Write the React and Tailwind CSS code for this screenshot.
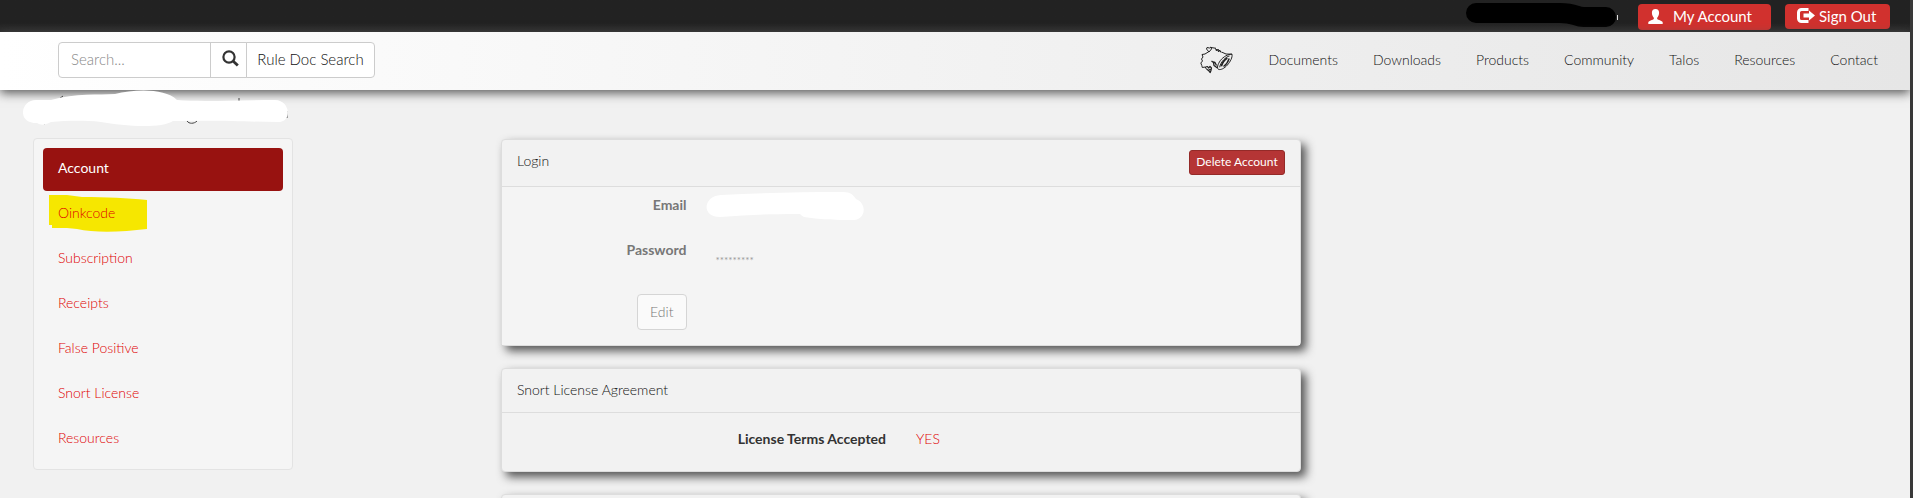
const navLinks = ['Documents', 'Downloads', 'Products', 'Community', 'Talos', 'Resources', 'Contact'];
const sideLinks = ['Account', 'Oinkcode', 'Subscription', 'Receipts', 'False Positive', 'Snort License', 'Resources'];

function UserIcon() {
  return (
    <svg width="15" height="15" viewBox="0 0 15 15" fill="currentColor" aria-hidden="true">
      <path d="M7.5 0C5 0 3.9 1.6 3.9 3.8c0 2 .8 3.9 1.9 4.9.3 1.3-.2 1.6-1.2 2C2.6 11.4.6 12.2.3 13.200V15h14.400v-1.800c-.3-1-2.300-1.800-4.300-2.500-1-.4-1.500-.7-1.200-2 1.100-1 1.900-2.900 1.900-4.900C11.100 1.600 10 0 7.500 0z" />
    </svg>
  );
}

function SignOutIcon() {
  return (
    <svg width="18" height="15" viewBox="0 0 18 15" aria-hidden="true">
      <path d="M11.500 1.500H4.500a3 3 0 0 0-3 3v6a3 3 0 0 0 3 3h7" fill="none" stroke="currentColor" strokeWidth="3" />
      <path d="M12 2.500l6 5-6 5V9.500H6.500v-4H12z" fill="currentColor" />
    </svg>
  );
}

function SearchIcon() {
  return (
    <svg width="17" height="17" viewBox="0 0 17 17" fill="none" stroke="currentColor" aria-hidden="true">
      <circle cx="7" cy="7" r="5.6" strokeWidth="2.2" />
      <path d="M11 11l4.800 4.600" strokeWidth="2.800" />
    </svg>
  );
}

function PigLogo() {
  return (
    <svg width="33" height="28" viewBox="0 0 33 28" fill="none" stroke="#222" strokeWidth="1" strokeLinejoin="round" aria-hidden="true">
      <path d="M9 5.500L5 8 2 8.500 3 11 1.500 13 2.500 15 .8 17l1 2.500.5 2 3-.5 1 2" />
      <path d="M9 6L6.500 3 7 1.500l2.500.5L11 1l.5 2-2.500 3M11 1.500l5 .8M15.500 2.500l1 2.500 1.500-1.500.5 2.500 1.500-1.500 1 2M16 3.500l3 .5 1.500 1.500M21.500 6l4.500 2 6 .2" />
      <path d="M32 8.200c.6 3.200-1.600 7.300-4.600 10.800-3 3.400-6.900 5.300-9 4.300-1.700-1-.9-4.800 2-8.800 2.800-3.700 7.800-6.500 11.600-6.300z" />
      <path d="M29.500 10c-3.500.6-9 6-9.800 11.300" />
      <path d="M21.300 20.300c.8-3 3.200-6.500 6-8.300" strokeWidth="1.800" />
      <path d="M23.500 20.500c2.500-1.800 4.800-5 5.700-8" strokeWidth="1.400" />
      <path d="M11.500 15l2 1.500.5 3 3.500 2.500M13 16l2 .5 1.500 3" strokeWidth="1.300" />
      <path d="M5.500 21l2-.5 1 1.500 1.500-1.500 1.500 1.500-.5 2.500-1 2.500M6.500 23l2 1.500 2-1.500M8.500 24.500l1.500 2" strokeWidth="1.200" />
    </svg>
  );
}

function Card({ title, action, children }) {
  return (
    <section className="rounded border border-[#ddd] bg-[#f2f2f2] shadow-[5px_5px_10px_#555]">
      <header className="flex items-start justify-between border-b border-[#ddd] px-[15px] pt-[10px] pb-[11px]">
        <h2 className="leading-[22px]">{title}</h2>
        {action}
      </header>
      {children}
    </section>
  );
}

export default function App() {
  return (
    <div className="flex h-screen flex-col overflow-hidden border-r-[3px] border-[#3a3a3a] bg-[#f1f1f1] font-['Lato',sans-serif] text-sm font-light text-[#111]">
      <div className="flex h-8 shrink-0 items-start justify-end bg-linear-to-b from-[#222] from-70% to-[#2d2d2d] pt-1 pr-5">
        <svg className="-mt-1 mr-5" width="153" height="30" viewBox="0 0 153 30" aria-hidden="true">
          <path d="M11 13h84c16 0 15 4 24 4h22" fill="none" stroke="#000" strokeWidth="20" strokeLinecap="round" />
          <path d="M152.500 15v5" stroke="#ddd" />
        </svg>
        <a href="#account" className="flex h-[26px] w-[133px] items-center gap-[10px] rounded bg-[#d1312e] pb-[2px] pl-[10px] text-[15px] leading-6 font-normal text-white">
          <UserIcon />
          My Account
        </a>
        <a href="#signout" className="ml-[14px] flex h-[25px] w-[105px] items-center gap-1 rounded bg-[#d1312e] pb-[2px] pl-3 text-[15px] leading-6 font-normal text-white">
          <SignOutIcon />
          Sign Out
        </a>
      </div>

      <header className="relative flex h-[58px] shrink-0 items-center justify-between bg-linear-to-r from-white to-[#e6e6e6] pr-8 pb-[2px] pl-[58px] shadow-[0_3px_10px_#555]">
        <form className="flex h-9 text-[15px]">
          <input aria-label="Search" placeholder="Search..." className="w-[153px] rounded-l border border-[#ccc] bg-white px-3 outline-none placeholder:text-[#888]" />
          <button type="button" aria-label="Run search" className="-ml-px flex w-[37px] items-center justify-center border border-[#ccc] bg-white pb-1 pl-1 text-[#333]">
            <SearchIcon />
          </button>
          <button type="button" className="-ml-px w-[129px] rounded-r border border-[#ccc] bg-white whitespace-nowrap">Rule Doc Search</button>
        </form>
        <nav className="flex items-center gap-[35px]">
          <a href="#home" aria-label="Home"><PigLogo /></a>
          {navLinks.map((name) => (
            <a key={name} href={'#' + name.toLowerCase()}>{name}</a>
          ))}
        </nav>
      </header>

      <div className="flex items-start px-[33px]">
        <aside className="w-[260px] shrink-0">
          <div className="relative h-12">
            <svg className="absolute top-0 -left-[10px]" width="270" height="40" viewBox="0 0 270 40" aria-hidden="true">
              <path d="M36 9l4-3M164 31c2 3 7 3 10 0M216 8v5M264 21v7M143 8v3M21 34l4-2" stroke="#444" fill="none" />
              <path d="M13 10h15c25-7 48-5 64-6 20-5 50-6 62 6 25 2 60 0 98 0 15 0 18 22 3 22-28 0-50-2-105-1-12 8-50 5-72 1-20-2-35-1-50 0-8 4-10 3-14 1-21 0-16-23-1-23z" fill="#fff" />
            </svg>
          </div>
          <nav className="flex flex-col gap-[2px] rounded border border-[#e3e3e3] bg-[#f5f5f5] px-[9px] pt-[9px] pb-2">
            {sideLinks.map((name, i) => (
              <a
                key={name}
                href={'#' + name.toLowerCase().replace(' ', '-')}
                className={
                  i === 0
                    ? 'rounded bg-[#981210] px-[15px] pt-2 pb-[11px] leading-6 font-normal text-white'
                    : 'relative px-[15px] pt-2 pb-[11px] leading-6 text-[#e00000]'
                }
              >
                {name === 'Oinkcode' && (
                  <svg className="absolute top-[2px] left-[6px]" width="98" height="37" viewBox="0 0 98 37" aria-hidden="true">
                    <path d="M0 0h18l15 2c25 0 45 1 65 3v29c-25 3-52 4-70 0l-10-1H3v-3H0z" fill="#f6e700" />
                  </svg>
                )}
                <span className="relative">{name}</span>
              </a>
            ))}
          </nav>
        </aside>

        <main className="ml-[208px] flex max-w-[800px] flex-1 flex-col gap-[22px] pt-[49px]">
          <Card
            title="Login"
            action={
              <button type="button" className="h-[25px] w-24 rounded-[3px] border border-[#942a28] bg-[#b53535] pb-[2px] text-xs leading-5 font-normal whitespace-nowrap text-white">
                Delete Account
              </button>
            }
          >
            <dl className="grid h-[158px] grid-cols-[25%_1fr] grid-rows-[45px_45px_1fr] bg-[#f4f4f4] text-[#777]">
              <dt className="pt-[6px] pr-[15px] text-right leading-6 font-bold">Email</dt>
              <dd className="pt-[5px] pl-1">
                <svg width="160" height="32" viewBox="0 0 160 32" aria-label="Hidden address" role="img">
                  <path d="M15 3c40-2 80-3 122-3 8 0 10 3 13 7 12 5 9 21-2 21-18 0-30 0-50-3-4-2-2-3-6-3-30 0-50 1-78 3-19 0-17-21 1-22z" fill="#fff" />
                </svg>
              </dd>
              <dt className="pt-[6px] pr-[15px] text-right leading-6 font-bold">Password</dt>
              <dd className="pt-4 pl-[14px] text-[10px] leading-6 font-normal text-[#999]">*********</dd>
              <dt className="flex items-start justify-end pt-[17px] pr-[15px]">
                <button type="button" className="h-9 rounded border border-[#d5d5d5] bg-[#fafafa] px-3 leading-6 text-[#777]">Edit</button>
              </dt>
            </dl>
          </Card>

          <Card title="Snort License Agreement">
            <dl className="grid h-[58px] grid-cols-2 gap-x-[30px] pt-[14px] leading-6">
              <dt className="text-right font-bold text-[#333]">License Terms Accepted</dt>
              <dd className="text-[#e00000]">YES</dd>
            </dl>
          </Card>

          <Card title="" />
        </main>
      </div>
    </div>
  );
}
